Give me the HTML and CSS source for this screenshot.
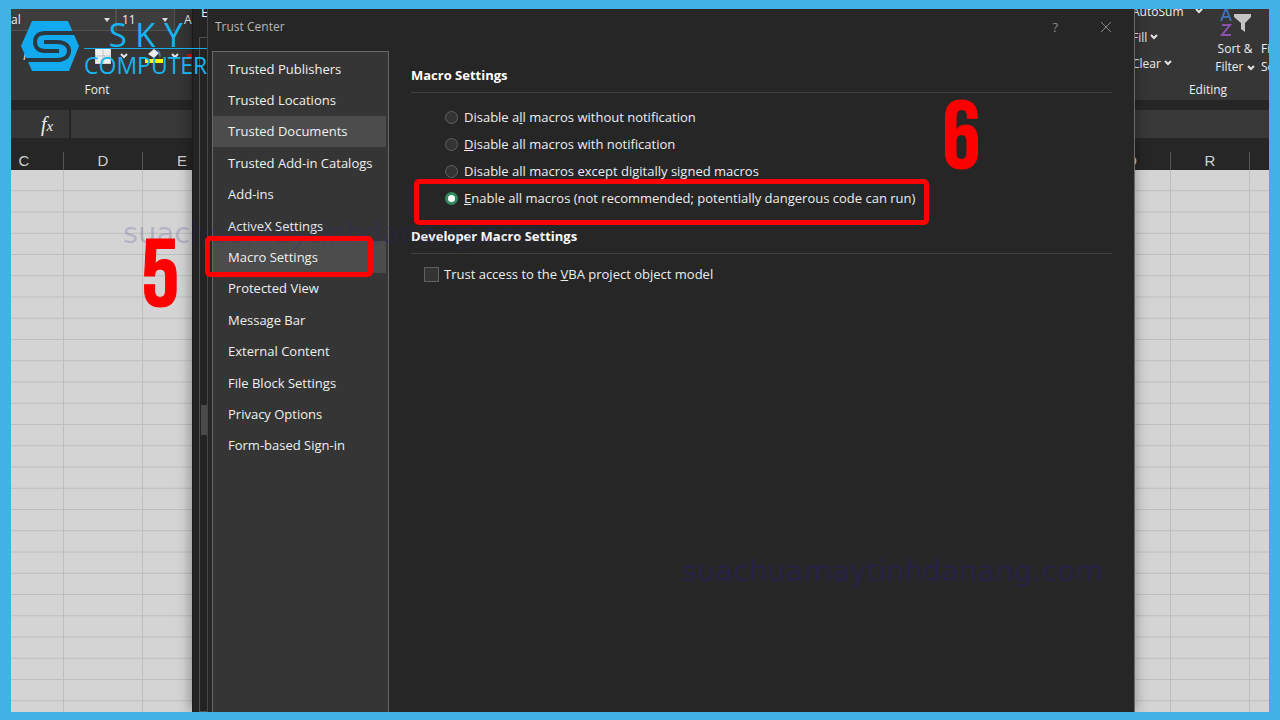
FILE: index.html
```
<!DOCTYPE html>
<html lang="en">
<head>
<meta charset="utf-8">
<title>Trust Center</title>
<link rel="stylesheet" href="styles.css">
</head>
<body>
<main class="frame">
  <section class="workbook">
    <div class="ribbon">
      <div class="group font-group">
        <div class="row boxes">
          <button class="combo name-box" type="button"><span>al</span><i class="tri"></i></button>
          <button class="combo size-box" type="button"><span>11</span><i class="tri"></i></button>
          <button class="plain" type="button">A</button>
        </div>
        <div class="row tools">
          <button class="plain italic" type="button">I</button>
          <button class="plain under" type="button">U</button>
          <svg class="chev" viewBox="0 0 8 6"><path d="M1 1l3 3 3-3"/></svg>
          <svg class="tool border-tool" viewBox="0 0 16 16"><path fill="#eee" d="M1 1h14v14H1z"/><path stroke="#999" stroke-dasharray="1 1" d="M1 8h14M8 1v14"/></svg>
          <svg class="chev" viewBox="0 0 8 6"><path d="M1 1l3 3 3-3"/></svg>
          <svg class="tool bucket" viewBox="0 0 18 16"><path fill="#eee" d="M3 6l6-5 5 4-5 5z"/><path fill="#4a80c8" d="M12 2c4 1 4 5 3 8z"/><path fill="#ff0" d="M0 11h18v4H0z"/></svg>
          <svg class="chev" viewBox="0 0 8 6"><path d="M1 1l3 3 3-3"/></svg>
          <i class="red"></i>
        </div>
        <div class="group-name">Font</div>
      </div>
      <div class="group edit-group">
        <div class="edit-cols">
          <div class="edit-list">
            <button class="plain" type="button">AutoSum <svg class="chev wide" viewBox="0 0 8 6"><path d="M1 1l3 3 3-3"/></svg></button>
            <button class="plain" type="button">Fill <svg class="chev" viewBox="0 0 8 6"><path d="M1 1l3 3 3-3"/></svg></button>
            <button class="plain" type="button">Clear <svg class="chev" viewBox="0 0 8 6"><path d="M1 1l3 3 3-3"/></svg></button>
          </div>
          <button class="plain sort" type="button">
            <svg class="sort-icon" viewBox="0 0 36 28"><path fill="none" stroke="#3f6fb5" stroke-width="2" d="M4 9L9-4l5 13M6 5h6"/><path fill="none" stroke="#8e4fb0" stroke-width="2" d="M5 13h8L5 23h9"/><path fill="#c4c4c4" d="M17 2h17v3l-6 6v9l-4-3v-6l-7-6z"/></svg>
            <span>Sort &amp;</span>
            <span>Filter <svg class="chev" viewBox="0 0 8 6"><path d="M1 1l3 3 3-3"/></svg></span>
          </button>
          <button class="plain find" type="button"><span>Find &amp;</span><span>Select</span></button>
        </div>
        <div class="group-name">Editing</div>
      </div>
    </div>
    <div class="formula"><span class="fx">f<small>x</small></span><input class="formula-input" type="text" aria-label="Formula bar"></div>
    <div class="heads">
      <div class="cols"><span>C</span><span>D</span><span>E</span></div>
      <div class="cols"><span>Q</span><span>R</span><span>S</span></div>
    </div>
    <div class="sheet"><div class="cells left"></div><div class="cells right"></div></div>
  </section>

  <div class="options"><span class="letter">E</span><i class="thumb"></i></div>

  <section class="dialog">
    <header class="title"><h1>Trust Center</h1>
      <div class="title-buttons">
        <button class="plain" type="button">?</button>
        <button class="plain" type="button" aria-label="Close"><svg class="close" viewBox="0 0 12 12"><path d="M1 1l10 10M11 1L1 11"/></svg></button>
      </div>
    </header>
    <div class="body">
      <nav class="side">
        <ul class="menu">
          <li><a href="#">Trusted Publishers</a></li>
          <li><a href="#">Trusted Locations</a></li>
          <li><a class="hot" href="#">Trusted Documents</a></li>
          <li><a href="#">Trusted Add-in Catalogs</a></li>
          <li><a href="#">Add-ins</a></li>
          <li><a href="#">ActiveX Settings</a></li>
          <li><a class="hot" href="#">Macro Settings</a></li>
          <li><a href="#">Protected View</a></li>
          <li><a href="#">Message Bar</a></li>
          <li><a href="#">External Content</a></li>
          <li><a href="#">File Block Settings</a></li>
          <li><a href="#">Privacy Options</a></li>
          <li><a href="#">Form-based Sign-in</a></li>
        </ul>
      </nav>
      <form class="panel">
        <h2>Macro Settings</h2>
        <div class="choices">
          <label><input type="radio" name="macro"><span>Disable a<u>l</u>l macros without notification</span></label>
          <label><input type="radio" name="macro"><span><u>D</u>isable all macros with notification</span></label>
          <label><input type="radio" name="macro"><span>Disable all macros except di<u>g</u>itally signed macros</span></label>
          <label><input type="radio" name="macro" checked><span><u>E</u>nable all macros (not recommended; potentially dangerous code can run)</span></label>
        </div>
        <h2>Developer Macro Settings</h2>
        <label class="trust"><input type="checkbox"><span>Trust access to the <u>V</u>BA project object model</span></label>
      </form>
    </div>
  </section>

  <div class="mark mark-a">suachuamaytinhdanang.com</div>
  <div class="mark mark-b">suachuamaytinhdanang.com</div>
  <div class="box box-nav"></div>
  <div class="box box-radio"></div>
  <div class="digit five">5</div>
  <div class="digit six">6</div>

  <div class="logo">
    <svg class="hex" viewBox="0 0 58 50"><path fill="#12a9ee" d="M11 0h36l11 25-10 25H11L0 25z"/><path fill="none" stroke="#2b3840" stroke-width="4" d="M54 12H24c-7 0-10 4-10 9s3 9 10 9h14M5 39h31c8 0 12-4 12-9s-4-9-12-9H23"/></svg>
    <div class="brand"><span class="sky">S K Y</span><span class="computer">COMPUTER</span></div>
  </div>
</main>
</body>
</html>
```
FILE: styles.css
```
* { box-sizing: border-box; }
html, body { height: 100%; }
body { margin: 0; background: #41b1e8; padding: 9px 11px 8px; font: 13px/18px "Open Sans", "Noto Sans", sans-serif; color: #eee; }
button { font: inherit; color: inherit; background: none; border: 0; padding: 0; }
.frame { position: relative; height: 100%; overflow: hidden; background: #262626; }
.workbook { height: 100%; display: flex; flex-direction: column; }
.ribbon { display: flex; justify-content: space-between; height: 91px; background: #363636; font-size: 12px; }
.group { display: flex; flex-direction: column; justify-content: space-between; overflow: hidden; }
.font-group { width: 190px; }
.row { display: flex; align-items: center; }
.boxes { height: 22px; }
.combo { display: flex; align-items: center; justify-content: space-between; height: 22px; background: #3d3d3d; border: 1px solid #505050; border-top: 0; }
.name-box { width: 105px; border-left: 0; padding-right: 5px; }
.size-box { width: 59px; padding: 0 6px 0 5px; }
.boxes .plain { padding-left: 9px; }
.tri { border: 3px solid transparent; border-top: 4px solid #ddd; border-bottom: 0; }
.tools { gap: 8px; padding-left: 12px; height: 24px; }
.italic { font-style: italic; }
.under { text-decoration: underline; margin-left: 16px; }
.chev { width: 8px; height: 6px; fill: none; stroke: #e4e4e4; stroke-width: 2; flex: none; }
.tool { width: 18px; height: 18px; flex: none; }
.border-tool { margin-left: 11px; }
.bucket { margin-left: 9px; }
.red { width: 5px; height: 5px; background: #e01010; flex: none; }
.group-name { text-align: center; line-height: 18px; padding-bottom: 1px; }
.font-group .group-name { padding-right: 18px; }
.edit-group { width: 140px; }
.edit-cols { display: flex; align-items: flex-end; height: 67px; overflow: hidden; white-space: nowrap; }
.edit-list { display: flex; flex-direction: column; gap: 8px; width: 80px; padding: 0 0 3px 3px; flex: none; align-items: flex-start; }
.edit-list .chev { margin-bottom: 2px; }
.edit-list .wide { margin-left: 8px; }
.sort { display: flex; flex-direction: column; align-items: center; width: 52px; flex: none; }
.sort-icon { width: 36px; height: 28px; overflow: visible; }
.find { display: flex; flex-direction: column; width: 40px; flex: none; align-items: flex-start; }
.edit-group .group-name { padding-left: 18px; }
.formula { display: flex; align-items: stretch; margin-top: 10px; height: 28px; background: #363636; }
.fx { width: 60px; border-right: 2px solid #262626; text-align: center; padding: 3px 0 0 14px; font: italic 20px/22px "Liberation Serif", serif; }
.fx small { font-size: 15px; }
.formula-input { flex: 1; min-width: 0; background: #383838; border: 0; color: inherit; }
.heads { display: flex; justify-content: space-between; margin-top: 14px; height: 18px; color: #d0d0d0; font: 15px/18px "Liberation Sans", sans-serif; overflow: hidden; }
.cols { display: flex; }
.cols span { width: 79px; flex: none; text-align: center; border-right: 1px solid #555; }
.cols:first-child { margin-left: -26px; }
.cols:last-child { margin-right: -60px; }
.sheet { flex: 1; display: flex; justify-content: space-between; background: #d4d4d4; }
.cells { width: 190px; background-image: linear-gradient(to top, #bebebe 1px, transparent 1px), linear-gradient(to left, #bebebe 1px, transparent 1px); background-size: 79px calc(100% / 25.5), 79px 100%; }
.left { background-position: -26px 0; }
.right { background-position: right -60px top 0; }
.options { position: absolute; left: 181px; right: 135px; top: 0; bottom: 0; background: #232323; border-left: 1px solid #1a1a1a; overflow: hidden; box-shadow: 0 0 14px rgba(0,0,0,.4); }
.letter { position: absolute; left: 8px; top: -6px; }
.options::before { content: ""; position: absolute; left: 6px; top: 28px; bottom: 0; width: 8px; border: 1px solid #505050; }
.thumb { position: absolute; left: 8px; top: 396px; width: 6px; height: 30px; background: #4a4a4a; }
.dialog { position: absolute; left: 196px; right: 134px; top: 0; bottom: 0; display: flex; flex-direction: column; background: #262626; border-left: 1px solid #484848; border-right: 1px solid #6a6a6a; }
.title { display: flex; justify-content: space-between; align-items: center; height: 35px; padding: 0 22px 0 7px; color: #b8b8b8; }
.title h1 { margin: 0; font-size: 12px; line-height: 18px; font-weight: 400; }
.title-buttons { display: flex; align-items: center; gap: 42px; color: #888; }
.close { display: block; width: 12px; height: 12px; stroke: #888; fill: none; }
.body { flex: 1; display: flex; margin-top: 7px; }
.side { width: 177px; flex: none; margin-left: 4px; background: #353535; border: 1px solid #686868; border-bottom: 0; }
.menu { list-style: none; margin: 1px 0 0; padding: 0; display: grid; grid-template-rows: repeat(13, 1fr); height: 408px; }
.menu li { display: flex; }
.menu a { flex: 1; display: flex; align-items: center; padding-left: 15px; margin-right: 2px; color: #f0f0f0; text-decoration: none; font-size: 13px; white-space: nowrap; }
.menu .hot { background: #4c4c4c; }
.panel { flex: 1; padding: 15px 22px 0; }
.panel h2 { margin: 0; padding-bottom: 8px; border-bottom: 1px solid #404040; font-size: 13px; line-height: 18px; font-weight: 700; color: #fff; }
.choices { display: flex; flex-direction: column; gap: 9px; padding: 15px 0 20px 34px; }
.panel label { display: flex; align-items: center; gap: 6px; line-height: 18px; white-space: nowrap; }
.panel input { appearance: none; margin: 0; width: 13px; height: 13px; flex: none; background: #343434; border: 1px solid #606060; }
.panel input[type=radio] { border-radius: 50%; }
.panel input[type=radio]:checked { background: #fff; border: 3px solid #2f8a60; }
.panel input[type=checkbox] { width: 15px; height: 15px; }
.panel .trust { padding: 11px 0 0 13px; gap: 5px; }
.mark { position: absolute; font: 29px/32px "DejaVu Sans", sans-serif; color: rgba(38, 24, 150, .3); pointer-events: none; }
.mark-a { left: 112px; top: 208px; color: rgba(40, 40, 130, .2); }
.mark-b { left: 671px; top: 546px; }
.box { position: absolute; border: 5px solid #f00; border-radius: 5px; }
.box-nav { left: 194px; top: 227px; width: 168px; height: 41px; }
.box-radio { left: 403px; top: 170px; width: 515px; height: 46px; }
.digit { position: absolute; color: #f00; font: 400 96px/96px "Bebas Neue", "Open Sans Condensed", sans-serif; -webkit-text-stroke: 1px #f00; }
.five { left: 130px; top: 221px; }
.six { left: 931px; top: 83px; }
.logo { position: absolute; left: 10px; top: 12px; display: flex; color: #16b4f0; }
.hex { width: 58px; height: 50px; }
.brand { display: flex; flex-direction: column; font-family: "Open Sans", "Noto Sans", sans-serif; font-weight: 400; margin-left: 5px; }
.sky { font-size: 33px; line-height: 27px; text-align: center; border-bottom: 1px solid #16aeea; }
.computer { font-size: 23px; line-height: 32px; }
```
